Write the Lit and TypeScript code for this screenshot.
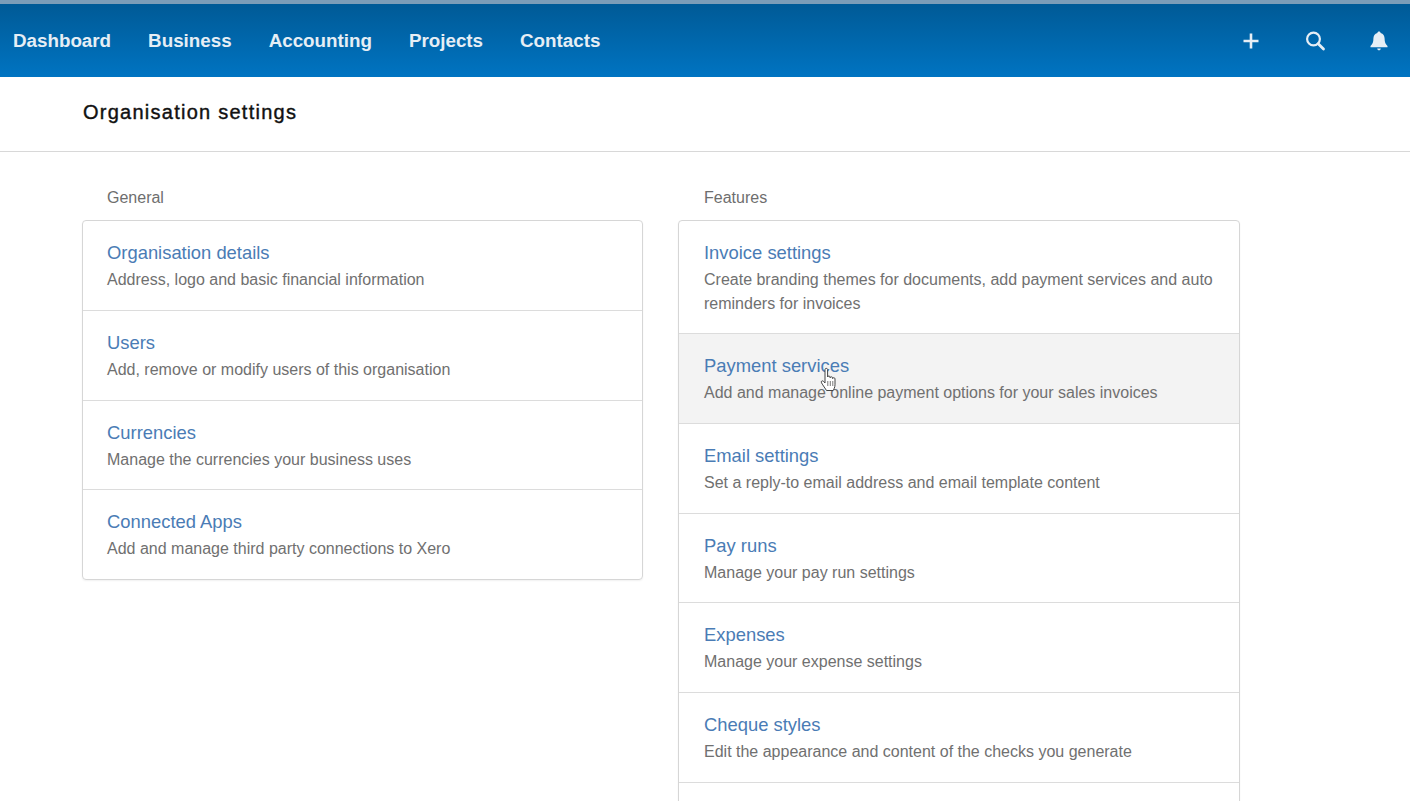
import { LitElement, html, css, svg } from 'lit';
import { customElement } from 'lit/decorators.js';

type Item = { title: string; text: string; hover?: boolean };

const navLinks = ['Dashboard', 'Business', 'Accounting', 'Projects', 'Contacts'];

const general: Item[] = [
  { title: 'Organisation details', text: 'Address, logo and basic financial information' },
  { title: 'Users', text: 'Add, remove or modify users of this organisation' },
  { title: 'Currencies', text: 'Manage the currencies your business uses' },
  { title: 'Connected Apps', text: 'Add and manage third party connections to Xero' },
];

const features: Item[] = [
  { title: 'Invoice settings', text: 'Create branding themes for documents, add payment services and auto reminders for invoices' },
  { title: 'Payment services', text: 'Add and manage online payment options for your sales invoices', hover: true },
  { title: 'Email settings', text: 'Set a reply-to email address and email template content' },
  { title: 'Pay runs', text: 'Manage your pay run settings' },
  { title: 'Expenses', text: 'Manage your expense settings' },
  { title: 'Cheque styles', text: 'Edit the appearance and content of the checks you generate' },
  { title: '', text: '' },
];

const plusIcon = svg`<path d="M12 4.500v15M4.500 12h15" stroke="currentColor" stroke-width="2.600" fill="none"/>`;
const searchIcon = svg`<circle cx="10.500" cy="10" r="6.400" stroke="currentColor" stroke-width="2.200" fill="none"/><path d="M15.200 14.800l5.300 5.200" stroke="currentColor" stroke-width="2.800" stroke-linecap="round" fill="none"/>`;
const bellIcon = svg`<path d="M12 2.500c.9 0 1.500.6 1.600 1.400 2.700.7 4 2.900 4 5.600 0 3.800.9 5.700 2.900 7.500v1.200h-17v-1.200c2-1.800 2.900-3.700 2.900-7.500 0-2.700 1.300-4.900 4-5.600.1-.8.700-1.400 1.600-1.400z" fill="currentColor"/><path d="M10.200 19.600h3.600a1.800 1.800 0 0 1-3.600 0z" fill="currentColor"/>`;

@customElement('app-root')
export class AppRoot extends LitElement {
  static styles = css`
    :host {
      display: block;
      height: 100vh;
      overflow: hidden;
      position: relative;
      background: #fff;
      font-family: 'Liberation Sans', Arial, sans-serif;
    }
    .strip {
      height: 4px;
      background: #7c9db8;
    }
    .nav {
      height: 73px;
      display: flex;
      align-items: center;
      justify-content: space-between;
      padding: 0 19px 0 13px;
      background: linear-gradient(#005a96, #0074c2);
      color: #e6eef5;
    }
    .links {
      display: flex;
      gap: 37px;
    }
    .links a {
      font-size: 18.800px;
      font-weight: 700;
    }
    .icons {
      display: flex;
      gap: 40px;
    }
    .icons svg {
      width: 24px;
      height: 24px;
      display: block;
    }
    .head {
      height: 75px;
      box-sizing: border-box;
      padding: 0 0 3px 83px;
      display: flex;
      align-items: center;
      border-bottom: 1px solid #d8d8d8;
      font-size: 20px;
      letter-spacing: 1.250px;
      color: #111;
      -webkit-text-stroke: 0.400px #111;
    }
    .cols {
      display: grid;
      grid-template-columns: 561px 562px;
      gap: 35px;
      padding: 36px 0 0 82px;
    }
    .label {
      padding-left: 25px;
      font-size: 16px;
      line-height: 20px;
      color: #6e6e6e;
      margin-bottom: 12px;
    }
    section + section .label {
      padding-left: 26px;
    }
    .card {
      border: 1px solid #d6d6d6;
      border-radius: 4px;
      box-shadow: 0 1px 2px rgba(0, 0, 0, 0.06);
    }
    .row {
      padding: 20px 24px 17.800px;
      border-top: 1px solid #dcdcdc;
    }
    section + section .row {
      padding-left: 25px;
    }
    .row:first-child {
      border-top: 0;
    }
    section + section .row:first-child {
      padding-bottom: 17px;
    }
    .row.hover {
      background: #f3f3f3;
    }
    .title {
      font-size: 18.400px;
      line-height: 24px;
      min-height: 24px;
      color: #4a7cb5;
    }
    .text {
      margin-top: 3px;
      font-size: 16px;
      line-height: 24px;
      min-height: 24px;
      color: #707070;
    }
    .pointer {
      position: absolute;
      left: 820px;
      top: 367px;
      width: 18px;
      height: 25px;
    }
  `;

  private renderCard(label: string, items: Item[]) {
    return html`
      <section>
        <div class="label">${label}</div>
        <div class="card">
          ${items.map(
            (i) => html`
              <div class="row ${i.hover ? 'hover' : ''}">
                <div class="title">${i.title}</div>
                <div class="text">${i.text}</div>
              </div>
            `,
          )}
        </div>
      </section>
    `;
  }

  render() {
    return html`
      <div class="strip"></div>
      <nav class="nav">
        <div class="links">${navLinks.map((l) => html`<a>${l}</a>`)}</div>
        <div class="icons">
          <svg viewBox="0 0 24 24">${plusIcon}</svg>
          <svg viewBox="0 0 24 24">${searchIcon}</svg>
          <svg viewBox="0 0 24 24">${bellIcon}</svg>
        </div>
      </nav>
      <div class="head">Organisation settings</div>
      <div class="cols">
        ${this.renderCard('General', general)} ${this.renderCard('Features', features)}
      </div>
      <svg class="pointer" viewBox="0 0 18 25">
        <path
          d="M5 2.500c0-1.500 2.600-1.500 2.600 0v7.500c0-1.300 2.500-1.300 2.500 0v.8c0-1.300 2.500-1.300 2.500 0v.8c0-1.200 2.400-1.200 2.400.2v6c0 2.600-1.300 4.700-2 5.700H6.500C5.500 21.800 3 18.500 1.500 15.800c-.9-1.600 1-2.700 2.100-1.400L5 16z"
          fill="#fff"
          stroke="#444"
          stroke-width="1"
          stroke-linejoin="round"
        />
        <path d="M7.800 14v5M10.300 14v5M12.800 14v5" stroke="#555" stroke-width="0.800" fill="none" />
      </svg>
    `;
  }
}
